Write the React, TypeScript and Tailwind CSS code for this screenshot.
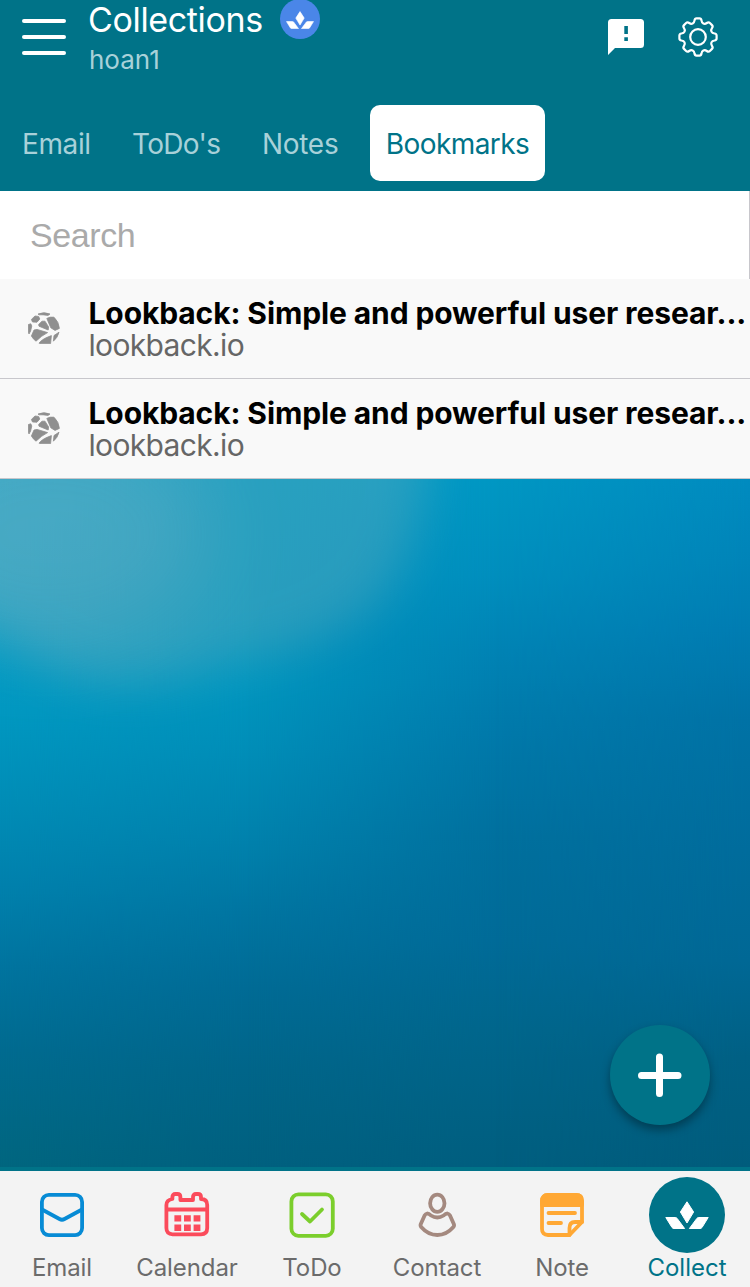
import React from 'react';

const tabs = ['Email', "ToDo's", 'Notes', 'Bookmarks'];

const bookmarks = [
  { id: 1, title: 'Lookback: Simple and powerful user resear...', domain: 'lookback.io' },
  { id: 2, title: 'Lookback: Simple and powerful user resear...', domain: 'lookback.io' }
];

const Lotus = ({ className }: { className?: string }) => (
  <svg viewBox="0 0 44 28" className={className} fill="currentColor" stroke="currentColor" strokeWidth="1" strokeLinejoin="round">
    <path d="M22 .8 28.6 11 22 22 15.4 11Z" />
    <path d="M.8 16.5h9.4q1.2 0 2 1L19.6 27.5H9q-1.2 0-2-1Z" />
    <path d="M43.2 16.5h-9.4q-1.2 0-2 1L24.4 27.5H35q1.2 0 2-1Z" />
  </svg>
);

const GearIcon = () => (
  <svg width="40" height="40" viewBox="-20 -20 40 40" fill="none" stroke="currentColor" strokeWidth="2.2" strokeLinejoin="round">
    <circle r="7.8" />
    <path d="M-3.5-16.5Q-3.2-18.6-1.5-18.6H1.5Q3.2-18.6 3.5-16.5C3.8-13.5 6.4-12.2 8.8-14Q10.6-15.3 11.9-14L14-11.9Q15.3-10.6 14-8.8C12.2-6.4 13.5-3.8 16.5-3.5Q18.6-3.2 18.6-1.5V1.5Q18.6 3.2 16.5 3.5C13.5 3.8 12.2 6.4 14 8.8Q15.3 10.6 14 11.9L11.9 14Q10.6 15.3 8.8 14C6.4 12.2 3.8 13.5 3.5 16.5Q3.2 18.6 1.5 18.6H-1.5Q-3.2 18.6-3.5 16.5C-3.8 13.5-6.4 12.2-8.8 14Q-10.6 15.3-11.9 14L-14 11.9Q-15.3 10.6-14 8.8C-12.2 6.4-13.5 3.8-16.5 3.5Q-18.6 3.2-18.6 1.5V-1.5Q-18.6-3.2-16.5-3.5C-13.5-3.8-12.2-6.4-14-8.8Q-15.3-10.6-14-11.9L-11.9-14Q-10.6-15.3-8.8-14C-6.4-12.2-3.8-13.5-3.5-16.5Z" />
  </svg>
);

const GlobeIcon = () => (
  <svg width="32" height="32" viewBox="0 0 32 32" fill="#8f8f8f" stroke="#8f8f8f" strokeWidth=".8" strokeLinejoin="round">
    <path d="M10 2Q16-.6 22 2L20 3.4Q15 2.6 11 2.8Z" />
    <path d="M7 4 10.6 4.4 11.8 7 9 10.2 4.5 10 3.4 7.4Z" />
    <path d="M14 9.2 17 9.2 20.6 15 20.2 18 11 14.2 10.6 12.5Z" />
    <path d="M18.8 6.4Q22 4.6 26 5.2Q31 10 31.4 16.4L27 18.4 22.8 15.8Z" />
    <path d="M.4 12.5 2.8 11.8 3.8 14 2.6 19 1 22 .4 20Z" />
    <path d="M6 18 9 17.4 19.6 20.6Q13 24 8 29.2Q5 27 3.4 24Z" />
    <path d="M11 31.2Q14 27 23.4 23.6L22.6 31.6H13Z" />
    <path d="M26 23.5 31 20.2Q29.5 26 25.4 29.2Z" />
  </svg>
);

const EmailIcon = () => (
  <svg width="46" height="46" viewBox="0 0 46 46" fill="none" stroke="#078bd5" strokeWidth="3.8" strokeLinejoin="round">
    <rect x="2.9" y="2.9" width="40.2" height="40.2" rx="7" />
    <path d="M3 17.5 20.5 27Q23 28.5 25.5 27L43 17.5" />
  </svg>
);

const CalendarIcon = () => (
  <svg width="46" height="46" viewBox="0 0 46 46" fill="none" stroke="#fb4b5b" strokeWidth="3.8" strokeLinejoin="round">
    <path d="M8.4 6.5V5Q8.4 2 11.4 2H13.4Q16.4 2 16.4 5V8H29V5Q29 2 32 2H34Q37 2 37 5V7Q43.2 7 43.2 13V36Q43.2 42.3 37 42.3H8.6Q2.4 42.3 2.4 36V13Q2.4 8 8.4 7Z" />
    <path d="M3 17.5H43" />
    <path d="M10.4 26.4H37M10.4 35.8H37" strokeWidth="6.4" strokeDasharray="6.8 2.8" />
  </svg>
);

const TodoIcon = () => (
  <svg width="46" height="46" viewBox="0 0 46 46" fill="none" stroke="#7bce2c" strokeWidth="3.8" strokeLinecap="round" strokeLinejoin="round">
    <rect x="2.4" y="2.4" width="41.4" height="41.4" rx="7" />
    <path d="M13 22 21 29.5 33 17.5" />
  </svg>
);

const ContactIcon = () => (
  <svg width="46" height="46" viewBox="0 0 46 46" fill="none" stroke="#a4897f" strokeWidth="3.8" strokeLinejoin="round">
    <ellipse cx="23.3" cy="11.2" rx="7.2" ry="8.6" />
    <path d="M13.2 21.5Q15 21.5 17 23.5Q23.3 27.5 29.6 23.5Q31.6 21.5 33.4 21.5Q35 21.8 36 23.5L39.8 32Q40.5 34 39.4 35Q32.5 43 23.3 43T7.2 35Q6.1 34 6.8 32L10.6 23.5Q11.6 21.8 13.2 21.5Z" />
  </svg>
);

const NoteIcon = () => (
  <svg width="46" height="46" viewBox="0 0 46 46" fill="none" stroke="#ffa834" strokeWidth="3.8" strokeLinecap="round" strokeLinejoin="round">
    <path d="M3 9Q3 3 9 3H37Q43 3 43 9V30L30.5 43H9Q3 43 3 37Z" />
    <path d="M3 9Q3 3 9 3H37Q43 3 43 9V13H3Z" fill="#ffa834" />
    <path d="M43 30H36Q30.5 30 30.5 36V43M9.5 21H36M9.5 31H22" />
  </svg>
);

const navItems = [
  { name: 'Email', icon: <EmailIcon /> },
  { name: 'Calendar', icon: <CalendarIcon /> },
  { name: 'ToDo', icon: <TodoIcon /> },
  { name: 'Contact', icon: <ContactIcon /> },
  { name: 'Note', icon: <NoteIcon /> }
];

// Vertical gradients blended left to right, with a soft cloud on top
const Wallpaper = () => (
  <div className="absolute inset-0 overflow-hidden">
    <div className="absolute inset-0 bg-[linear-gradient(to_bottom,#0ba0c9_0%,#0098c1_34%,#008cb6_48%,#0080ac_60%,#00749f_71%,#006b90_83%,#00667f_100%)]" />
    <div className="absolute inset-0 bg-[linear-gradient(to_bottom,#0099c3_0%,#0095be_30%,#008eb8_39%,#0082ad_52%,#0075a1_63%,#006b95_74%,#006589_86%,#00607f_100%)] mask-[linear-gradient(to_right,transparent_0%,black_33%)]" />
    <div className="absolute inset-0 bg-[linear-gradient(to_bottom,#0097c3_0%,#008ebd_14%,#0083b4_25%,#0079aa_37%,#00709e_52%,#006b98_67%,#00668c_80%,#005e7f_100%)] mask-[linear-gradient(to_right,transparent_33%,black_66%)]" />
    <div className="absolute inset-0 bg-[linear-gradient(to_bottom,#008bbf_0%,#0084b8_12%,#007cb2_22%,#0072a5_35%,#006c9c_54%,#006895_70%,#006084_84%,#005c7c_100%)] mask-[linear-gradient(to_right,transparent_66%,black_100%)]" />
    <svg className="absolute inset-0" width="750" height="688" viewBox="0 0 750 688">
      <defs>
        <filter id="cloud" x="-30%" y="-30%" width="160%" height="160%">
          <feGaussianBlur stdDeviation="24" />
        </filter>
        <filter id="glow" x="-80%" y="-80%" width="260%" height="260%">
          <feGaussianBlur stdDeviation="45" />
        </filter>
      </defs>
      <path d="M-80-80H430Q435 50 380 120Q340 165 230 185Q150 215 80 200Q20 175-80 110Z" fill="#c8c0b8" opacity=".2" filter="url(#cloud)" />
      <ellipse cx="50" cy="55" rx="160" ry="110" fill="#d8c8c8" opacity=".14" filter="url(#glow)" />
    </svg>
  </div>
);

const App = () => {
  return (
    <div className="flex h-[1287px] w-[750px] flex-col overflow-hidden font-[Inter,sans-serif]">
      <header className="h-[191px] shrink-0 bg-[#007388] text-white">
        <div className="flex h-[105px] items-start pl-[22px] pr-8">
          <button className="mt-[19px] flex w-11 flex-col gap-3" aria-label="Menu">
            <span className="h-1 w-full rounded-full bg-white" />
            <span className="h-1 w-full rounded-full bg-white" />
            <span className="h-1 w-full rounded-full bg-white" />
          </button>
          <div className="ml-[22px] flex flex-1 flex-col">
            <div className="flex h-10 items-center gap-[17px]">
              <h1 className="w-[175px] whitespace-nowrap text-[34px] leading-10 tracking-[-0.35px]">Collections</h1>
              <span className="-mt-0.5 flex size-10 items-center justify-center rounded-full bg-[#4a86e8]">
                <Lotus className="mt-0.5 h-[18px] w-7" />
              </span>
            </div>
            <p className="pl-px text-[26px] leading-10 text-[#a8d1d9]">hoan1</p>
          </div>
          <svg className="mt-[19px]" width="36" height="36" viewBox="0 0 36 36">
            <path d="M3.5 0H32.5Q36 0 36 3.5V25.5Q36 29 32.5 29H7L0 36V3.5Q0 0 3.5 0Z" fill="white" />
            <path d="M16.3 7h3.6v8h-3.6zM16.3 18.3h3.6v3.7h-3.6z" fill="#007388" />
          </svg>
          <button className="ml-[34px] mt-[17px]" aria-label="Settings">
            <GearIcon />
          </button>
        </div>
        <nav className="flex h-[76px] items-center pl-[22px] text-[28px] text-[#a8d1d9]">
          <span className="w-[110px] pt-0.5 tracking-[-0.4px]">{tabs[0]}</span>
          <span className="w-[130px] pt-0.5 tracking-[-0.7px]">{tabs[1]}</span>
          <span className="w-[108px] pt-0.5 tracking-[-0.3px]">{tabs[2]}</span>
          <span className="flex h-[76px] w-[175px] items-center justify-center rounded-[10px] bg-white pt-0.5 tracking-[-0.55px] text-[#007388]">
            {tabs[3]}
          </span>
        </nav>
      </header>

      <input
        type="text"
        placeholder="Search"
        className="h-[88px] w-full shrink-0 border-r border-[#c8c7cc] bg-white px-[30px] font-['Liberation_Sans',sans-serif] text-[34px] tracking-[-0.4px] outline-none placeholder:text-[#aaaaaa]"
      />

      <ul className="shrink-0">
        {bookmarks.map((bookmark) => (
          <li key={bookmark.id} className="flex h-[100px] border-b border-[#c8c7cc] bg-[#f9f9f9] pl-7">
            <div className="mt-[33px] w-[60px] shrink-0">
              <GlobeIcon />
            </div>
            <div className="min-w-0 flex-1 pl-[0.5px] pt-[18px]">
              <h2 className="whitespace-nowrap text-[30px] font-bold leading-8 tracking-[-0.11px] text-black">
                {bookmark.title}
              </h2>
              <p className="text-[30px] leading-8 tracking-[-0.65px] text-[#666666]">{bookmark.domain}</p>
            </div>
          </li>
        ))}
      </ul>

      <main className="relative flex-1">
        <Wallpaper />
        <button
          className="absolute bottom-[42px] right-10 flex size-[100px] items-center justify-center rounded-full bg-[#007388] shadow-[0_5px_10px_rgba(0,0,0,0.35)]"
          aria-label="Add"
        >
          <svg width="44" height="44" viewBox="0 0 44 44" stroke="white" strokeWidth="7" strokeLinecap="round">
            <path d="M21.5 4V40.5M3.5 22.5H40" />
          </svg>
        </button>
      </main>

      <footer className="grid h-[120px] shrink-0 grid-cols-6 border-t-4 border-[#007388] bg-[#f3f3f3] text-[24px] text-[#6b6b6b]">
        {navItems.map((item) => (
          <div key={item.name} className="flex flex-col items-center pr-px pt-[21px]">
            <span className="mr-px">{item.icon}</span>
            <span className="mt-3.5 leading-8 tracking-[-0.1px]">{item.name}</span>
          </div>
        ))}
        <div className="flex flex-col items-center pr-px pt-1.5 text-[#007388]">
          <span className="mr-px flex size-[76px] shrink-0 items-center justify-center rounded-full bg-[#007388] text-white">
            <Lotus className="h-7 w-11" />
          </span>
          <span className="-mt-px leading-8">Collect</span>
        </div>
      </footer>
    </div>
  );
};

export default App;
